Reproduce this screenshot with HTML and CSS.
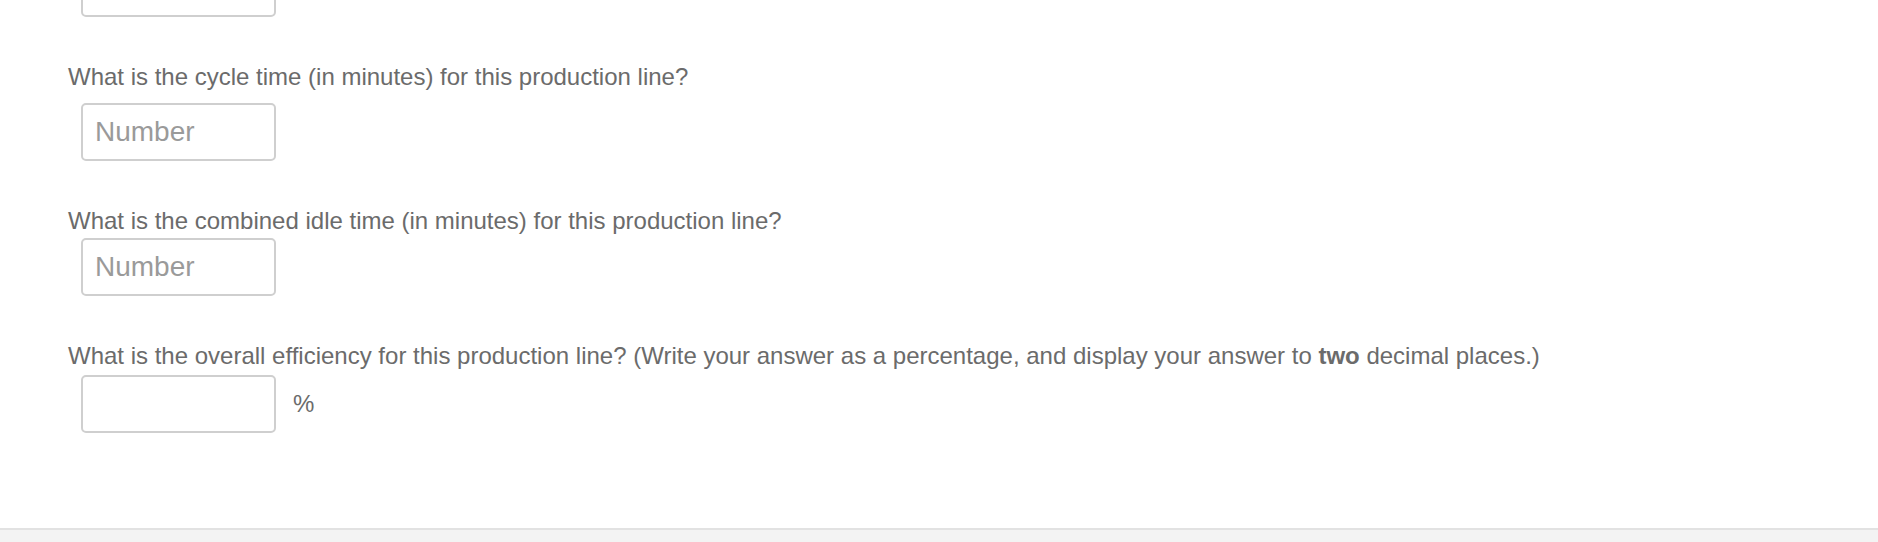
FILE: index.html
```html
<!DOCTYPE html>
<html lang="en">
<head>
<meta charset="utf-8">
<title>Production line questions</title>
<link rel="stylesheet" href="styles.css">
</head>
<body>
<main class="page">
  <div class="form">
    <div class="answer answer-top"><input class="field" type="text" aria-label="Previous answer"></div>

    <section class="question q1">
      <p class="prompt">What is the cycle time (in minutes) for this production line?</p>
      <div class="answer"><input class="field" type="text" placeholder="Number"></div>
    </section>

    <section class="question q2">
      <p class="prompt">What is the combined idle time (in minutes) for this production line?</p>
      <div class="answer"><input class="field" type="text" placeholder="Number"></div>
    </section>

    <section class="question q3">
      <p class="prompt">What is the overall efficiency for this production line? (Write your answer as a percentage, and display your answer to <b>two</b> decimal places.)</p>
      <div class="answer"><input class="field" type="text"><span class="unit">%</span></div>
    </section>
  </div>
</main>
<footer class="footer"></footer>
</body>
</html>
```
FILE: styles.css
```css
html, body {
  margin: 0;
  padding: 0;
  background: #ffffff;
}

body {
  font-family: "Liberation Sans", Arial, Helvetica, sans-serif;
  color: #6b6b6b;
  overflow: hidden;
  height: 542px;
  display: flex;
  flex-direction: column;
}

.page {
  flex: 1;
  padding-left: 68px;
}

.form {
  margin-top: -41px;
  display: flex;
  flex-direction: column;
}

.question {
  margin-top: 46px;
}

.prompt {
  margin: 0;
  font-size: 24px;
  line-height: 27px;
}

.prompt b {
  font-weight: bold;
}

.answer {
  display: flex;
  align-items: center;
  padding-left: 13px;
}

.q1 .answer { margin-top: 13px; }
.q2 .answer { margin-top: 4px; }
.q3 .answer { margin-top: 6px; }

.field {
  box-sizing: border-box;
  width: 195px;
  height: 58px;
  border: 2px solid #cfcfcf;
  border-radius: 5px;
  background: #ffffff;
  padding: 0 12px;
  font-family: "Liberation Sans", Arial, Helvetica, sans-serif;
  font-size: 28px;
  color: #555555;
  outline: none;
}

.field::placeholder {
  color: #9a9a9a;
  opacity: 1;
}

.unit {
  margin-left: 17px;
  font-size: 24px;
  color: #6b6b6b;
}

.footer {
  height: 12px;
  border-top: 2px solid #e2e2e2;
  background: #f3f3f3;
}
```
